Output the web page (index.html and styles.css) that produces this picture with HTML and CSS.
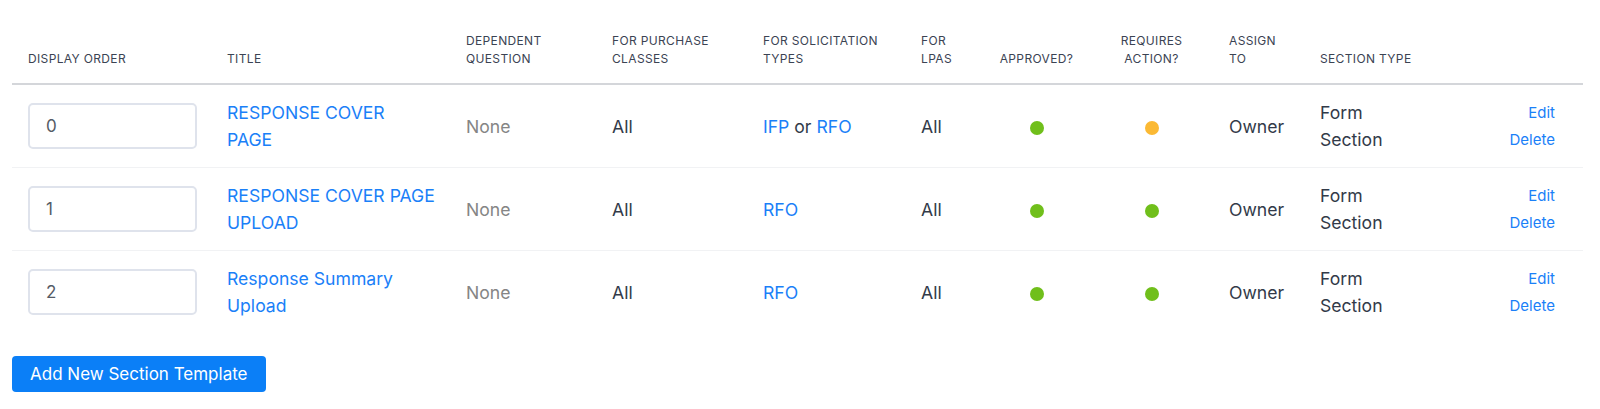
FILE: index.html
```html
<!DOCTYPE html>
<html>
<head>
<meta charset="utf-8">
<link rel="stylesheet" href="styles.css">
</head>
<body>
<div class="page">
  <table class="sections">
    <colgroup>
      <col class="w-order"><col class="w-title"><col class="w-dep"><col class="w-pc"><col class="w-st"><col class="w-lpa"><col class="w-appr"><col class="w-req"><col class="w-assign"><col class="w-type"><col class="w-act">
    </colgroup>
    <thead>
      <tr>
        <th>Display Order</th>
        <th>Title</th>
        <th>Dependent<br>Question</th>
        <th>For Purchase<br>Classes</th>
        <th>For Solicitation<br>Types</th>
        <th>For<br>LPAs</th>
        <th class="center">Approved?</th>
        <th class="center req">Requires<br>Action?</th>
        <th>Assign<br>To</th>
        <th>Section Type</th>
        <th></th>
      </tr>
    </thead>
    <tbody>
      <tr>
        <td><input class="order" type="text" value="0"></td>
        <td><a class="link" href="#">RESPONSE COVER<br>PAGE</a></td>
        <td class="muted">None</td>
        <td>All</td>
        <td><a class="link" href="#">IFP</a> or <a class="link" href="#">RFO</a></td>
        <td>All</td>
        <td class="center"><span class="dot green"></span></td>
        <td class="center req"><span class="dot orange"></span></td>
        <td>Owner</td>
        <td>Form<br>Section</td>
        <td class="actions"><a href="#">Edit</a><br><a href="#">Delete</a></td>
      </tr>
      <tr>
        <td><input class="order" type="text" value="1"></td>
        <td><a class="link" href="#">RESPONSE COVER PAGE<br>UPLOAD</a></td>
        <td class="muted">None</td>
        <td>All</td>
        <td><a class="link" href="#">RFO</a></td>
        <td>All</td>
        <td class="center"><span class="dot green"></span></td>
        <td class="center req"><span class="dot green"></span></td>
        <td>Owner</td>
        <td>Form<br>Section</td>
        <td class="actions"><a href="#">Edit</a><br><a href="#">Delete</a></td>
      </tr>
      <tr>
        <td><input class="order" type="text" value="2"></td>
        <td><a class="link" href="#">Response Summary<br>Upload</a></td>
        <td class="muted">None</td>
        <td>All</td>
        <td><a class="link" href="#">RFO</a></td>
        <td>All</td>
        <td class="center"><span class="dot green"></span></td>
        <td class="center req"><span class="dot green"></span></td>
        <td>Owner</td>
        <td>Form<br>Section</td>
        <td class="actions"><a href="#">Edit</a><br><a href="#">Delete</a></td>
      </tr>
    </tbody>
  </table>
  <button class="add-btn" type="button">Add New Section Template</button>
</div>
</body>
</html>
```
FILE: styles.css
```css
* { box-sizing: border-box; }
html, body { margin: 0; padding: 0; background: #ffffff; }
body {
  font-family: Inter, "Noto Sans", "Liberation Sans", sans-serif;
  color: #323a49;
  font-size: 17.6px;
}
.page {
  padding: 16px 0 0 12px;
}
.sections {
  width: 1571px;
  border-collapse: collapse;
  table-layout: fixed;
}
.w-order { width: 199px; }
.w-title { width: 239px; }
.w-dep { width: 146px; }
.w-pc { width: 151px; }
.w-st { width: 158px; }
.w-lpa { width: 72px; }
.w-appr { width: 119px; }
.w-req { width: 117px; }
.w-assign { width: 91px; }
.w-type { width: 140px; }
.w-act { width: 139px; }

.sections th {
  font-size: 12px;
  line-height: 18px;
  font-weight: 400;
  text-transform: uppercase;
  color: #3b4353;
  text-align: left;
  vertical-align: bottom;
  padding: 16px 0 15px 16px;
  border-bottom: 2px solid #d4d6da;
  letter-spacing: 0.35px;
  white-space: nowrap;
}
.sections td {
  font-size: 17.6px;
  line-height: 27px;
  padding: 14px 0 14px 16px;
  vertical-align: middle;
  border-bottom: 1px solid #f1f2f4;
  white-space: nowrap;
}
.sections tbody tr:last-child td { border-bottom: none; }
.sections .center { text-align: center; padding-left: 0; }
.sections .req { padding-left: 0; padding-right: 6px; }
.link { color: #1a80f8; text-decoration: none; }
.muted { color: #858585; }

.order {
  display: block;
  width: 169px;
  height: 46px;
  border: 2px solid #dfe3ec;
  border-radius: 5px;
  padding: 0 16px;
  font-family: inherit;
  font-size: 17px;
  color: #555b66;
  background: #fff;
}
.dot {
  display: inline-block;
  width: 14px;
  height: 14px;
  border-radius: 50%;
  vertical-align: middle;
}
.green { background: #70bf1b; }
.orange { background: #fbb934; }

.sections td.actions {
  text-align: right;
  padding-right: 28px;
  font-size: 15px;
}
.actions a { color: #1a80f8; text-decoration: none; }

.add-btn {
  margin-top: 23px;
  height: 36px;
  padding: 0 18px;
  background: #0b7ff7;
  color: #ffffff;
  border: none;
  border-radius: 4px;
  font-family: inherit;
  font-size: 17px;
  font-weight: 400;
}
```
